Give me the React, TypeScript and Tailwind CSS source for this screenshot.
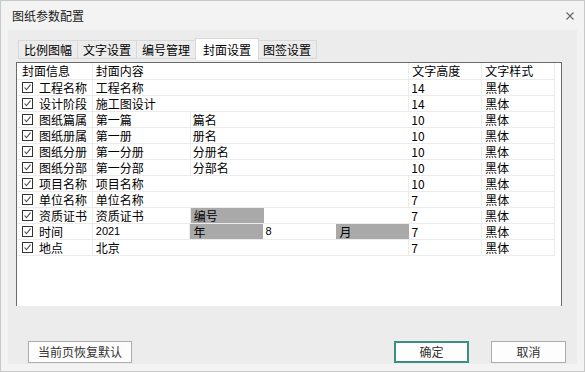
import React from 'react';

type Row = {
  name: string;
  content: string;
  extra?: string;
  kind?: 'cert' | 'date';
  height: string;
};

const rows: Row[] = [
  { name: '工程名称', content: '工程名称', height: '14' },
  { name: '设计阶段', content: '施工图设计', height: '14' },
  { name: '图纸篇属', content: '第一篇', extra: '篇名', height: '10' },
  { name: '图纸册属', content: '第一册', extra: '册名', height: '10' },
  { name: '图纸分册', content: '第一分册', extra: '分册名', height: '10' },
  { name: '图纸分部', content: '第一分部', extra: '分部名', height: '10' },
  { name: '项目名称', content: '项目名称', height: '10' },
  { name: '单位名称', content: '单位名称', height: '7' },
  { name: '资质证书', content: '资质证书', kind: 'cert', height: '7' },
  { name: '时间', content: '2021', kind: 'date', height: '7' },
  { name: '地点', content: '北京', height: '7' },
];

const tabs = ['比例图幅', '文字设置', '编号管理', '封面设置', '图签设置'];

function Check() {
  return (
    <svg width="11" height="11" viewBox="0 0 11 11" className="shrink-0">
      <rect x="0.5" y="0.5" width="10" height="10" fill="#fff" stroke="#333" />
      <path d="M2.5 5.5l2 2.2 4-5" fill="none" stroke="#555" strokeWidth="1.1" />
    </svg>
  );
}

function Col3({ row }: { row: Row }) {
  if (row.kind === 'cert') {
    return (
      <div className="w-[219px] flex">
        <div className="w-[73px] bg-[#a9a9a9] pl-[3px]">编号</div>
      </div>
    );
  }
  if (row.kind === 'date') {
    return (
      <div className="w-[219px] flex">
        <div className="w-[73px] bg-[#a9a9a9] pl-[3px]">年</div>
        <div className="w-[73px] pl-[2px] font-['Liberation_Sans',sans-serif] text-[11px]">8</div>
        <div className="w-[73px] bg-[#a9a9a9] pl-[3px]">月</div>
      </div>
    );
  }
  return <div className="w-[219px] pl-[2px]">{row.extra}</div>;
}

function TableRow({ row }: { row: Row }) {
  const split = !!row.extra || !!row.kind;
  return (
    <div className="flex h-[16px] leading-[15px] border-b border-[#ebebeb] w-[538px]">
      <div className="w-[76px] border-r border-[#ebebeb] flex items-center gap-[6px] pl-[5px]">
        <Check />
        <span>{row.name}</span>
      </div>
      {split ? (
        <>
          <div
            className={`w-[98px] border-r border-[#ebebeb] pl-[3px] ${
              row.kind === 'date' ? "font-['Liberation_Sans',sans-serif] text-[11px]" : ''
            }`}
          >
            {row.content}
          </div>
          <Col3 row={row} />
        </>
      ) : (
        <div className="w-[317px] border-r border-[#ebebeb] pl-[3px]">{row.content}</div>
      )}
      <div className="w-[73px] border-r border-[#ebebeb] pl-[2px]">{row.height}</div>
      <div className="w-[73px] border-r border-[#ebebeb] pl-[3px]">黑体</div>
    </div>
  );
}

export default function App() {
  return (
    <div className="w-[585px] h-[372px] border border-[#c8c8c8] bg-[#f3f3f3] flex flex-col text-[12px] text-black font-['Noto_Sans_CJK_SC',sans-serif] overflow-hidden">
      {/* Title bar */}
      <div className="h-[29px] shrink-0 flex items-center justify-between pl-[11px] pr-[10px]">
        <span className="text-[12px] text-[#1a1a1a]">图纸参数配置</span>
        <svg width="8" height="8" viewBox="0 0 8 8">
          <path d="M0.5 0.5l7 7M7.5 0.5l-7 7" stroke="#666" strokeWidth="1.1" />
        </svg>
      </div>

      {/* Body */}
      <div className="flex-1 mx-[7px] mb-[7px] bg-[#ececec] flex flex-col px-[8px]">
        {/* Tabs */}
        <div className="flex items-end h-[29px] pl-[2px]">
          {tabs.map((t) =>
            t === '封面设置' ? (
              <div
                key={t}
                className="w-[64px] h-[22px] -mx-[1px] mb-[-1px] bg-white border border-b-0 border-[#d9d9d9] flex items-center justify-center z-10"
              >
                {t}
              </div>
            ) : (
              <div
                key={t}
                className="w-[60px] h-[19px] -ml-px first:ml-0 border border-[#d9d9d9] flex items-center justify-center"
              >
                {t}
              </div>
            ),
          )}
        </div>

        {/* List */}
        <div className="mt-[3px] h-[244px] w-[546px] bg-white border-l border-t border-r border-[#6b6b6b]">
          <div className="flex h-[17px] leading-[16px] border-b border-[#ebebeb] w-[538px]">
            <div className="w-[76px] border-r border-[#ebebeb] pl-[5px]">封面信息</div>
            <div className="w-[317px] border-r border-[#ebebeb] pl-[3px]">封面内容</div>
            <div className="w-[73px] border-r border-[#ebebeb] pl-[3px]">文字高度</div>
            <div className="w-[73px] border-r border-[#ebebeb] pl-[3px]">文字样式</div>
          </div>
          {rows.map((r) => (
            <TableRow key={r.name} row={r} />
          ))}
        </div>

        {/* Buttons */}
        <div className="mt-auto mb-px flex items-center h-[22px] pl-[12px] pr-[3px] text-[#333]">
          <button className="w-[104px] h-[22px] border border-[#adadad] bg-[#fdfdfd] flex items-center justify-center">
            当前页恢复默认
          </button>
          <div className="flex-1" />
          <button className="w-[75px] h-[22px] border-2 border-[#3a8f80] bg-[#fdfdfd] flex items-center justify-center">
            确定
          </button>
          <button className="ml-[22px] w-[75px] h-[22px] border border-[#adadad] bg-[#fdfdfd] flex items-center justify-center">
            取消
          </button>
        </div>
      </div>
    </div>
  );
}
